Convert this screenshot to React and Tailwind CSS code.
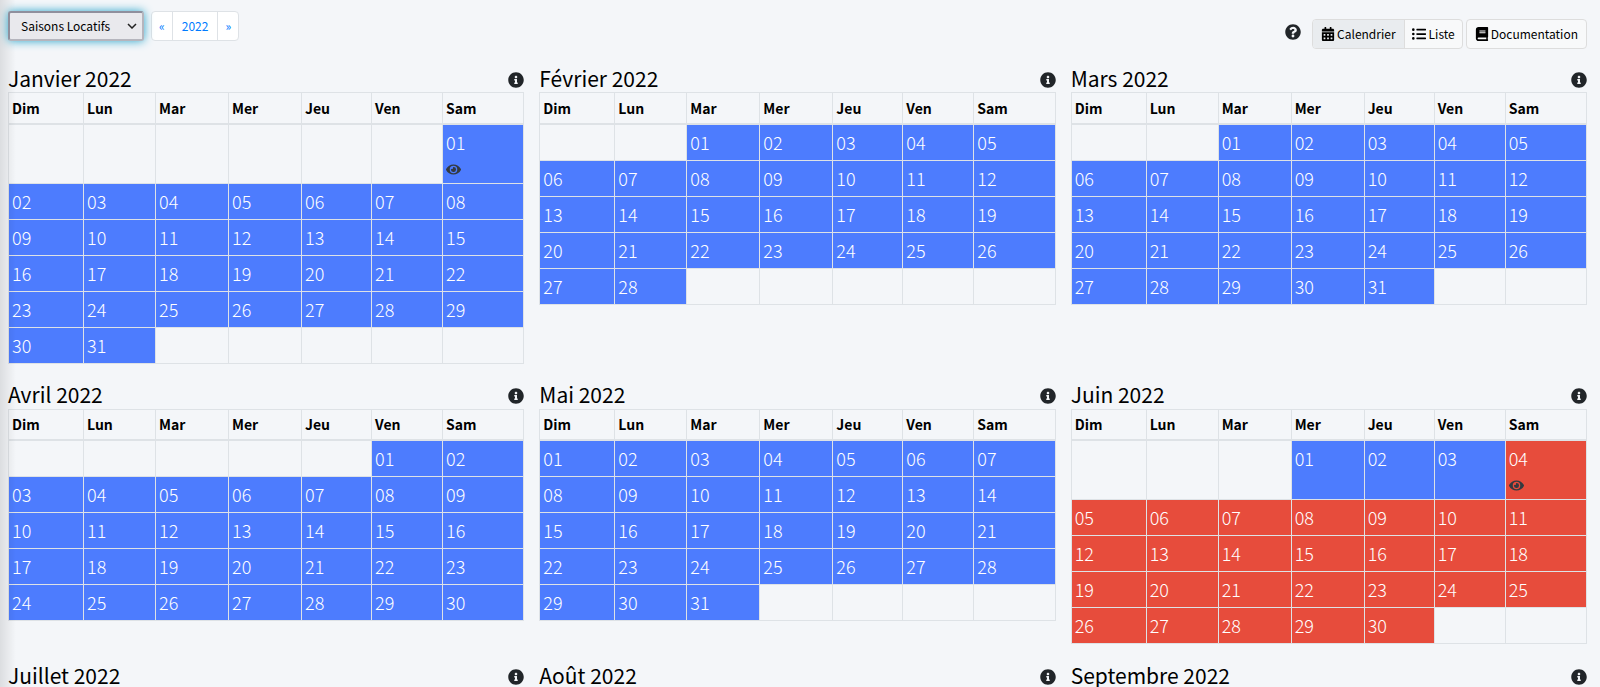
import React from 'react';
import { FaBook, FaCalendarAlt, FaEye, FaInfoCircle, FaListUl, FaQuestionCircle } from 'react-icons/fa';

const DAYS = ['Dim', 'Lun', 'Mar', 'Mer', 'Jeu', 'Ven', 'Sam'];

// start: weekday of the 1st, season: first day of the high season, eye: day that opens a period
const MONTHS = [
  { name: 'Janvier', start: 6, length: 31, eye: 1 },
  { name: 'Février', start: 2, length: 28 },
  { name: 'Mars', start: 2, length: 31 },
  { name: 'Avril', start: 5, length: 30 },
  { name: 'Mai', start: 0, length: 31 },
  { name: 'Juin', start: 3, length: 30, eye: 4, season: 4 },
  { name: 'Juillet', start: 5, length: 31, season: 1 },
  { name: 'Août', start: 1, length: 31, season: 1 },
  { name: 'Septembre', start: 4, length: 30, season: 1 },
];

const getWeeks = ({ start, length }) => {
  const weeks = [];
  for (let first = 1 - start; first <= length; first += 7) {
    weeks.push(DAYS.map((_, i) => (first + i >= 1 && first + i <= length ? first + i : null)));
  }
  return weeks;
};

const DayCell = ({ day, month }) => {
  if (!day) {
    return <td className="border border-[#dee2e6]"></td>;
  }
  const color = month.season && day >= month.season ? 'bg-[#e74c3c]' : 'bg-[#4d7cfe]';
  return (
    <td className={`h-9 border border-[#dee2e6] px-[3px] py-1 align-top text-white ${color}`}>
      <div className="text-lg leading-[27px] font-light">{String(day).padStart(2, '0')}</div>
      {month.eye === day && (
        <button type="button" aria-label="Voir la saison" className="mt-1 block h-[19px] text-[#343a40]">
          <FaEye size={15} />
        </button>
      )}
    </td>
  );
};

const Month = ({ month }) => (
  <section className="mb-4">
    <div className="flex h-[29px] items-center justify-between">
      <h4 className="text-[21px] leading-7">{month.name} 2022</h4>
      <button type="button" aria-label={`Informations ${month.name}`} className="mt-1 text-[#212529]">
        <FaInfoCircle size={16} />
      </button>
    </div>
    <table className="w-full table-fixed border-collapse border border-[#dee2e6]">
      <colgroup>
        <col className="w-[75px]" />
        <col className="w-[72px]" />
        <col className="w-[73px]" />
        <col className="w-[73px]" />
        <col className="w-[70px]" />
        <col className="w-[71px]" />
        <col />
      </colgroup>
      <thead>
        <tr>
          {DAYS.map((day) => (
            <th key={day} className="h-[31px] border border-b-2 border-[#dee2e6] px-[3px] text-left text-sm font-bold">
              {day}
            </th>
          ))}
        </tr>
      </thead>
      <tbody>
        {getWeeks(month).map((week, w) => (
          <tr key={w}>
            {week.map((day, i) => (
              <DayCell key={i} day={day} month={month} />
            ))}
          </tr>
        ))}
      </tbody>
    </table>
  </section>
);

const App = () => {
  return (
    <div className="relative min-h-screen bg-[#f4f6f9] pr-[13px] pl-2 font-['Noto_Sans_CJK_SC',sans-serif] text-black">
      <div className="pointer-events-none absolute inset-y-0 left-0 w-4 bg-linear-to-r from-black/10 to-transparent"></div>

      <div className="flex items-start justify-between pt-[11px] pb-[14px] text-xs">
        <div className="flex gap-[7px]">
          <div className="relative">
            <select
              aria-label="Saisons"
              className="h-[30px] w-[136px] appearance-none rounded-[3px] border-2 border-t-[#8f8f9d] border-r-[#b5b5bd] border-b-[#b5b5bd] border-l-[#8f8f9d] bg-[#e9e9ed] pr-6 pl-[11px] shadow-[0_0_10px_#2ba6cb]"
            >
              <option>Saisons Locatifs</option>
            </select>
            <svg
              viewBox="0 0 10 6"
              className="pointer-events-none absolute top-3 right-[7px] h-1.5 w-2.5 fill-none stroke-[#222222] stroke-[1.5]"
            >
              <path d="M1 1l4 4 4-4" />
            </svg>
          </div>
          <div className="flex h-[30px] divide-x divide-[#dee2e6] rounded border border-[#dee2e6] bg-white text-[#007bff]">
            <button type="button" className="px-[7px]">«</button>
            <button type="button" className="px-[9px]">2022</button>
            <button type="button" className="px-[7px]">»</button>
          </div>
        </div>

        <div className="flex items-center gap-[3px] pt-2">
          <button type="button" aria-label="Aide" className="mr-2 mb-1 text-[#212529]">
            <FaQuestionCircle size={16} />
          </button>
          <div className="flex h-[30px] divide-x divide-[#dddddd] overflow-hidden rounded border border-[#dddddd] bg-[#f8f9fa]">
            <button type="button" className="flex items-center gap-0.5 bg-[#e9ecef] px-2">
              <FaCalendarAlt size={14} />
              Calendrier
            </button>
            <button type="button" className="flex items-center gap-[3px] px-[7px]">
              <FaListUl size={14} />
              Liste
            </button>
          </div>
          <button type="button" className="flex h-[30px] items-center gap-0.5 rounded border border-[#dddddd] bg-[#f8f9fa] px-2">
            <FaBook size={14} />
            Documentation
          </button>
        </div>
      </div>

      <div className="grid grid-cols-3 items-start gap-x-[15px]">
        {MONTHS.map((month) => (
          <Month key={month.name} month={month} />
        ))}
      </div>
    </div>
  );
};

export default App;
